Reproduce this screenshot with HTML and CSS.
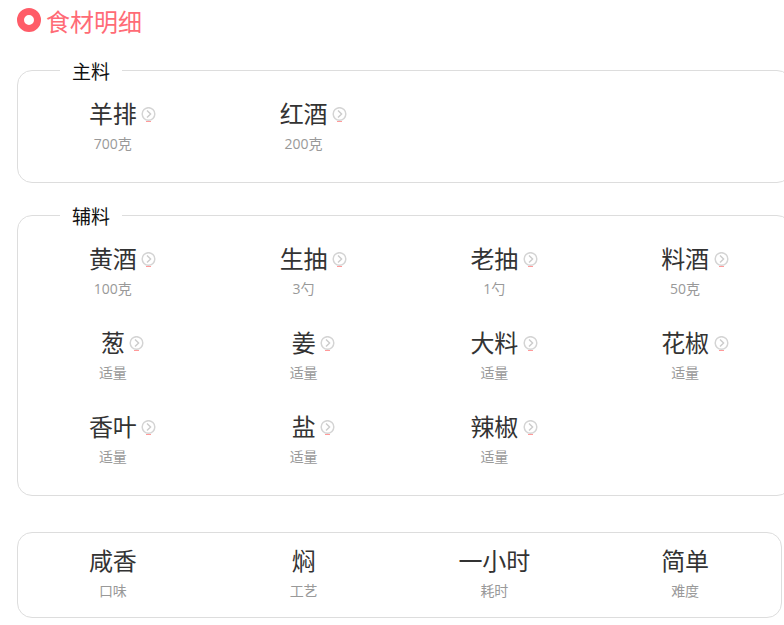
FILE: index.html
```html
<!DOCTYPE html>
<html lang="zh">
<head>
<meta charset="utf-8">
<title>食材明细</title>
<link rel="stylesheet" href="styles.css">
</head>
<body>
<svg class="defs" width="0" height="0"><defs>
<symbol id="go" viewBox="0 0 15 15">
<circle cx="7.5" cy="7" r="6.3" fill="none" stroke="#d4d4d4" stroke-width="1.5"/>
<path d="M6 3.4 9.6 7 6 10.6" fill="none" stroke="#cccccc" stroke-width="1.4"/>
<path d="M5 14.5h5" stroke="#ff9a9a" stroke-width="1"/>
</symbol>
</defs></svg>
<main class="page">
<h2 class="title"><span class="ring"></span>食材明细</h2>
<fieldset class="box box-main">
<legend>主料</legend>
<div class="grid">
<div class="item"><div class="name">羊排<svg class="go"><use href="#go"/></svg></div><div class="sub">700克</div></div>
<div class="item"><div class="name">红酒<svg class="go"><use href="#go"/></svg></div><div class="sub">200克</div></div>
</div>
</fieldset>
<fieldset class="box box-aux">
<legend>辅料</legend>
<div class="grid">
<div class="item"><div class="name">黄酒<svg class="go"><use href="#go"/></svg></div><div class="sub">100克</div></div>
<div class="item"><div class="name">生抽<svg class="go"><use href="#go"/></svg></div><div class="sub">3勺</div></div>
<div class="item"><div class="name">老抽<svg class="go"><use href="#go"/></svg></div><div class="sub">1勺</div></div>
<div class="item"><div class="name">料酒<svg class="go"><use href="#go"/></svg></div><div class="sub">50克</div></div>
<div class="item"><div class="name">葱<svg class="go"><use href="#go"/></svg></div><div class="sub">适量</div></div>
<div class="item"><div class="name">姜<svg class="go"><use href="#go"/></svg></div><div class="sub">适量</div></div>
<div class="item"><div class="name">大料<svg class="go"><use href="#go"/></svg></div><div class="sub">适量</div></div>
<div class="item"><div class="name">花椒<svg class="go"><use href="#go"/></svg></div><div class="sub">适量</div></div>
<div class="item"><div class="name">香叶<svg class="go"><use href="#go"/></svg></div><div class="sub">适量</div></div>
<div class="item"><div class="name">盐<svg class="go"><use href="#go"/></svg></div><div class="sub">适量</div></div>
<div class="item"><div class="name">辣椒<svg class="go"><use href="#go"/></svg></div><div class="sub">适量</div></div>
</div>
</fieldset>
<section class="box box-info">
<div class="grid">
<div class="item"><div class="name">咸香</div><div class="sub">口味</div></div>
<div class="item"><div class="name">焖</div><div class="sub">工艺</div></div>
<div class="item"><div class="name">一小时</div><div class="sub">耗时</div></div>
<div class="item"><div class="name">简单</div><div class="sub">难度</div></div>
</div>
</section>
</main>
</body>
</html>
```
FILE: styles.css
```css
html, body {
  margin: 0;
  height: 100%;
  overflow: hidden;
  background: #fff;
}
body {
  font-family: "Open Sans", "Noto Sans CJK SC", sans-serif;
  color: #333;
}
.defs { display: block; }
.page {
  width: 800px;
  padding: 7px 0 0 17px;
  box-sizing: border-box;
}
.title {
  display: flex;
  align-items: center;
  gap: 5px;
  margin: 0 0 30px;
  height: 30px;
  font-size: 24px;
  font-weight: 400;
  line-height: 30px;
  color: #ff6b76;
}
.ring {
  width: 24px;
  height: 24px;
  margin-bottom: 4px;
  box-sizing: border-box;
  border: 7px solid #ff5c68;
  border-radius: 50%;
}
.box {
  display: block;
  margin: 0;
  padding: 0;
  border: 1px solid #ddd;
  border-radius: 15px;
  box-sizing: border-box;
  min-width: 0;
}
legend {
  margin-left: 42px;
  padding: 4px 12px 0;
  font-size: 19px;
  line-height: 18px;
  color: #111;
}
.box-main {
  width: 775px;
  height: 124px;
  margin-top: -8px;
}
.box-aux {
  width: 775px;
  height: 292px;
  margin-top: 21px;
}
.box-info {
  width: 765px;
  height: 86px;
  margin-top: 36px;
}
.grid {
  display: grid;
  grid-template-columns: repeat(4, 190.75px);
  grid-auto-rows: 84px;
  margin-left: -0.5px;
}
.box-main .grid, .box-aux .grid { padding-top: 16px; }
.box-info .grid { padding-top: 11px; }
.item {
  display: flex;
  flex-direction: column;
  align-items: center;
}
.name {
  position: relative;
  margin-top: -1px;
  font-size: 24px;
  line-height: 36px;
  color: #333;
}
.go {
  position: absolute;
  left: calc(100% + 4.5px);
  top: 11px;
  width: 15px;
  height: 15px;
}
.sub {
  margin-top: 2px;
  font-size: 14px;
  line-height: 20px;
  color: #999;
}
```
